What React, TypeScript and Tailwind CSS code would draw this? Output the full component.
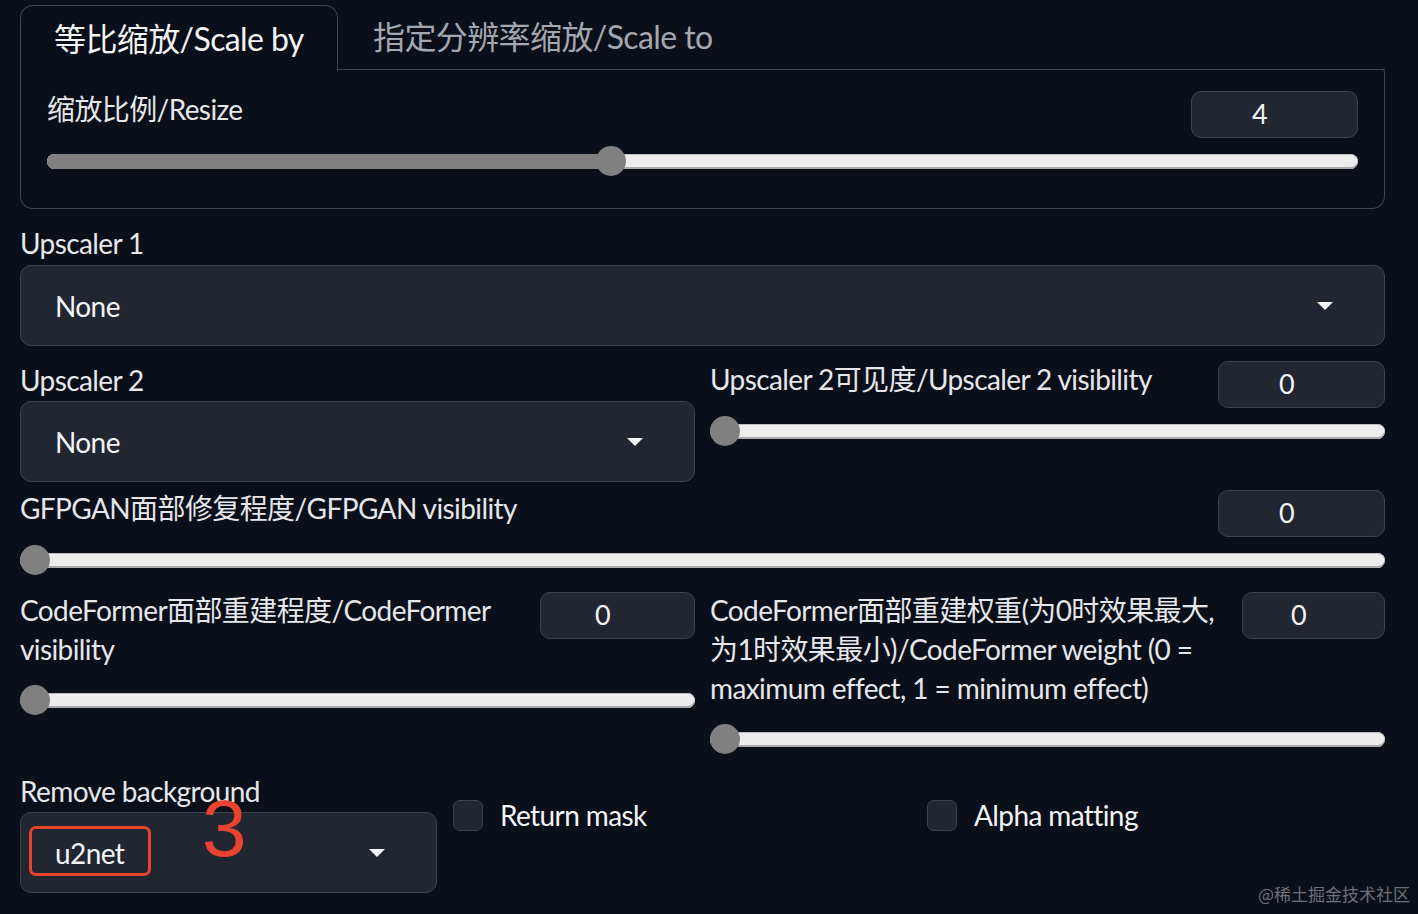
import React from 'react';

const FONT = "font-['Lato','Noto_Sans_CJK_SC',sans-serif] tracking-[-0.6px]";

function Caret() {
  return (
    <svg width="18" height="10" viewBox="0 0 18 10" className="shrink-0">
      <polygon points="1,1 17,1 9,9" fill="#f3f4f6" />
    </svg>
  );
}

function Dropdown({ value, className = '' }: { value: string; className?: string }) {
  return (
    <div
      className={`flex h-[81px] items-center justify-between rounded-[11px] border border-[#3f4451] bg-[#222631] pl-[34px] pr-[50px] text-[28px] text-[#f3f4f6] ${className}`}
    >
      <span>{value}</span>
      <Caret />
    </div>
  );
}

function NumberBox({ value, width }: { value: string; width: string }) {
  return (
    <div
      className={`flex h-[47px] shrink-0 items-center justify-center rounded-[10px] border border-[#3f4451] bg-[#222631] pr-[30px] text-[27px] text-[#f3f4f6] ${width}`}
    >
      {value}
    </div>
  );
}

function Slider({
  label,
  value,
  frac,
  boxWidth,
}: {
  label: React.ReactNode;
  value: string;
  frac: number;
  boxWidth: string;
}) {
  return (
    <div className="flex flex-col">
      <div className="flex items-start justify-between gap-4">
        <span className="-mt-px pb-2 text-[28px] leading-[39px] text-[#e5e7eb]">{label}</span>
        <NumberBox value={value} width={boxWidth} />
      </div>
      <div className="relative mt-2 flex h-[30px] items-center">
        <div className="h-[15px] w-full overflow-hidden rounded-full bg-[#ededed] shadow-[inset_0_1px_0_#bdbdbd,inset_0_-2px_0_#a9a9a9]">
          <div className="h-full bg-[#808080]" style={{ width: `calc(15px + ${frac} * (100% - 30px))` }} />
        </div>
        <div
          className="absolute top-0 h-[30px] w-[30px] rounded-full bg-[#808080]"
          style={{ left: `calc(${frac} * (100% - 30px))` }}
        />
      </div>
    </div>
  );
}

function Checkbox({ label }: { label: string }) {
  return (
    <div className="mt-[22px] flex items-center gap-[17px]">
      <div className="h-[31px] w-[30px] rounded-[7px] border border-[#3f4451] bg-[#222631]" />
      <span className="text-[28px] text-[#f3f4f6]">{label}</span>
    </div>
  );
}

export default function App() {
  return (
    <div className={`relative h-[914px] w-full overflow-hidden bg-[#0b0f19] pl-5 pr-[33px] pt-[5px] ${FONT}`}>
      {/* Tabs */}
      <div className="flex items-end">
        <div className="relative z-10 -mb-px flex h-[66px] w-[318px] items-center rounded-t-[13px] border border-b-0 border-[#3f4451] bg-[#0b0f19] pl-[33px] text-[32px] text-[#f3f4f6]">
          等比缩放/Scale by
        </div>
        <div className="flex h-[65px] flex-1 items-center border-b border-[#3f4451] pl-[35px] text-[32px] text-[#a3a7b0]">
          指定分辨率缩放/Scale to
        </div>
      </div>
      <div className="rounded-b-[13px] rounded-tr-[3px] border border-t-0 border-[#3f4451] px-[26px] pb-[32px] pt-[21px]">
        <Slider label="缩放比例/Resize" value="4" frac={3 / 7} boxWidth="w-[167px]" />
      </div>

      {/* Upscaler 1 */}
      <div className="mt-[15px] text-[28px] leading-[39px] text-[#e5e7eb]">Upscaler 1</div>
      <Dropdown value="None" className="mt-[2px]" />

      {/* Upscaler 2 row */}
      <div className="mt-[15px] grid grid-cols-2 gap-[15px]">
        <div className="flex flex-col">
          <span className="text-[28px] leading-[39px] text-[#e5e7eb]">Upscaler 2</span>
          <Dropdown value="None" className="mt-[1px]" />
        </div>
        <Slider label="Upscaler 2可见度/Upscaler 2 visibility" value="0" frac={0} boxWidth="w-[167px]" />
      </div>

      {/* GFPGAN */}
      <div className="mt-[8px]">
        <Slider label="GFPGAN面部修复程度/GFPGAN visibility" value="0" frac={0} boxWidth="w-[167px]" />
      </div>

      {/* CodeFormer row */}
      <div className="mt-[17px] grid grid-cols-2 gap-[15px]">
        <Slider
          label={
            <>
              CodeFormer面部重建程度/CodeFormer
              <br />
              visibility
            </>
          }
          value="0"
          frac={0}
          boxWidth="w-[155px]"
        />
        <Slider
          label={
            <span className="whitespace-nowrap">
              CodeFormer面部重建权重(为0时效果最大,
              <br />
              为1时效果最小)/CodeFormer weight (0 =
              <br />
              maximum effect, 1 = minimum effect)
            </span>
          }
          value="0"
          frac={0}
          boxWidth="w-[143px]"
        />
      </div>

      {/* Remove background row */}
      <div className="mt-[18px] flex gap-4">
        <div className="flex w-[417px] flex-col">
          <span className="text-[28px] leading-[39px] text-[#e5e7eb]">Remove background</span>
          <div className="relative">
            <Dropdown value="u2net" className="mt-[1px] h-[80px]" />
            <div className="pointer-events-none absolute left-[9px] top-[15px] h-[50px] w-[122px] rounded-[7px] border-[3px] border-[#e8432e]" />
            <span className="pointer-events-none absolute left-[182px] top-[-22px] font-['Liberation_Sans',sans-serif] text-[80px] font-light leading-none tracking-normal text-[#e8432e]">
              3
            </span>
          </div>
        </div>
        <div className="flex-1">
          <Checkbox label="Return mask" />
        </div>
        <div className="flex-1">
          <Checkbox label="Alpha matting" />
        </div>
      </div>

      <span className="absolute bottom-[8px] right-[8px] font-['Noto_Sans_CJK_SC',sans-serif] text-[17px] tracking-normal text-[#6b6f78]">
        @稀土掘金技术社区
      </span>
    </div>
  );
}
